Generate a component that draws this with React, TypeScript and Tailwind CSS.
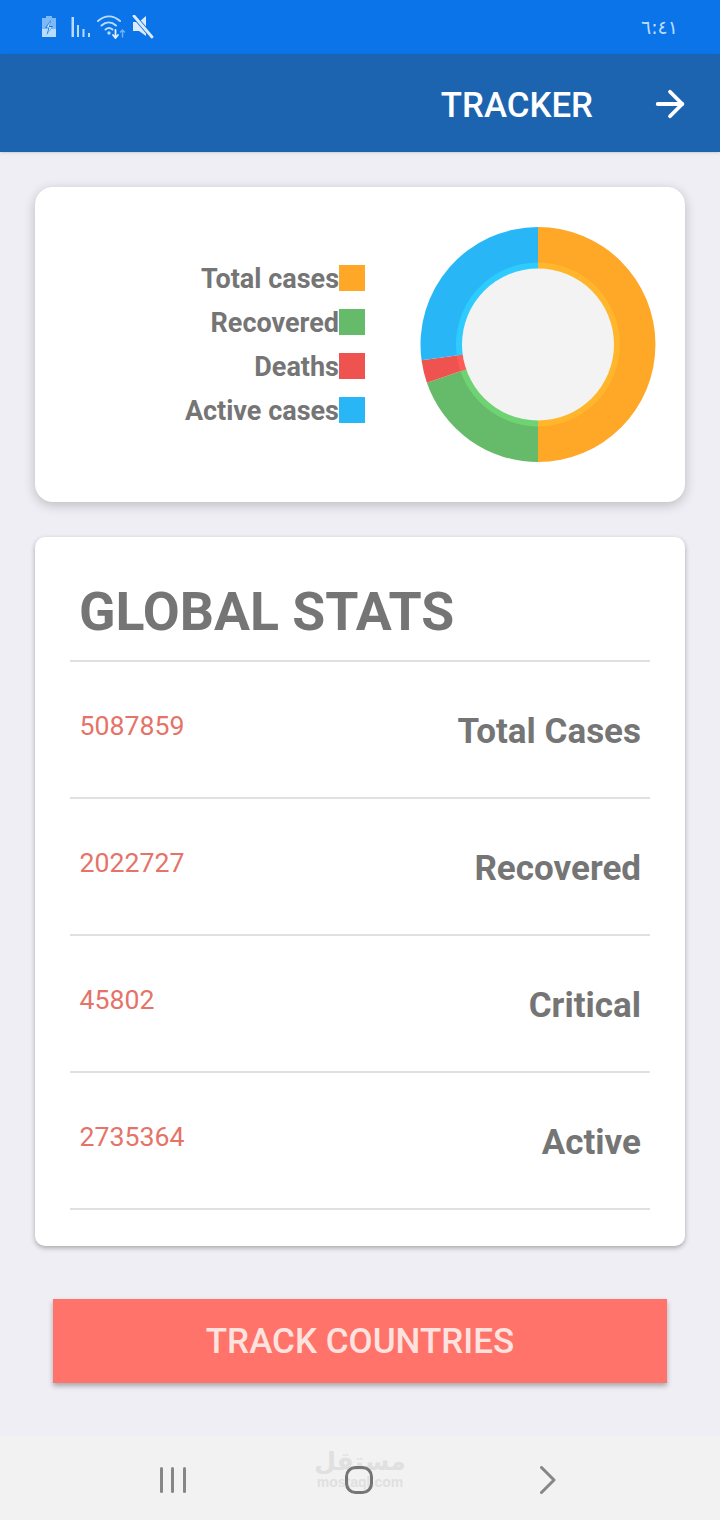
const legend = [
  { label: "Total cases", color: "bg-[#ffa726]" },
  { label: "Recovered", color: "bg-[#66bb6a]" },
  { label: "Deaths", color: "bg-[#ef5350]" },
  { label: "Active cases", color: "bg-[#29b6f6]" },
];

const stats = [
  { value: "5087859", label: "Total Cases" },
  { value: "2022727", label: "Recovered" },
  { value: "45802", label: "Critical" },
  { value: "2735364", label: "Active" },
];

const CX = 120;
const CY = 119.5;

const slicePath = (r: number, from: number, to: number) => {
  const point = (deg: number) => {
    const a = (deg * Math.PI) / 180;
    return `${CX + r * Math.sin(a)} ${CY - r * Math.cos(a)}`;
  };
  const large = to - from > 180 ? 1 : 0;
  return `M${CX} ${CY} L${point(from)} A${r} ${r} 0 ${large} 1 ${point(to)} Z`;
};

const slices = [
  { from: 0, to: 180, outer: "#ffa726", inner: "#ffb62c" },
  { from: 180, to: 251, outer: "#66bb6a", inner: "#6fd273" },
  { from: 251, to: 262.3, outer: "#ef5350", inner: "#ff5c58" },
  { from: 262.3, to: 360, outer: "#29b6f6", inner: "#2ecbff" },
];

const Donut = () => (
  <svg width="240" height="240" viewBox="0 0 240 240" className="shrink-0">
    {slices.map((s) => (
      <path key={s.outer} d={slicePath(117.5, s.from, s.to)} fill={s.outer} />
    ))}
    {slices.map((s) => (
      <path key={s.inner} d={slicePath(82, s.from, s.to)} fill={s.inner} />
    ))}
    <circle cx={CX} cy={CY} r="76" fill="#f3f3f3" />
  </svg>
);

const StatusIcons = () => (
  <div className="flex items-center">
    {/* battery */}
    <svg width="16" height="24" viewBox="0 0 16 24">
      <path d="M5 1h6v2h4v19H1V3h4z" fill="#7db8f7" />
      <path d="M1 14h14v8H1z" fill="#b9dcff" />
      <path d="M10 5 4 13h3.500L5.500 20l6.500-9H8.500z" fill="#0a74e8" />
      <path d="M9.500 6.500 5.500 12.500h3L7 17.500l3.800-5.500H7.800z" fill="#dbeafe" />
    </svg>
    {/* signal */}
    <svg width="20" height="24" viewBox="0 0 20 24" fill="#b9dcff" className="ml-[14px]">
      <rect x="0.500" y="2" width="2.500" height="20" />
      <rect x="6" y="10" width="2" height="12" />
      <rect x="11.500" y="14" width="2" height="8" />
      <rect x="17" y="18" width="2" height="4" />
    </svg>
    {/* wifi with up/down arrows */}
    <svg width="29" height="24" viewBox="0 0 29 24" fill="none" stroke="#b9dcff" strokeLinecap="round" className="ml-[6px]">
      <path d="M1 6C8 0 16 0 23 6" strokeWidth="2" />
      <path d="M4.500 10.500c4.500-4 10-4 14.500 0" strokeWidth="2" />
      <path d="M8.500 14.500c2-1.700 5-1.700 7 0" strokeWidth="2" />
      <circle cx="12" cy="18" r="1.700" fill="#b9dcff" stroke="none" />
      <path d="M18.500 15v8m-2.500-3 2.500 3 2.500-3" stroke="#e4f1ff" strokeWidth="1.800" />
      <path d="M25.500 22v-7m-2 2 2-2 2 2" stroke="#6db0f5" strokeWidth="1.500" />
    </svg>
    {/* muted speaker */}
    <svg width="22" height="24" viewBox="0 0 22 24" className="ml-[6px]">
      <path d="M1 7h6l7-6v20l-7-5H1z" fill="#dbeafe" />
      <path d="M2 1l18 21" stroke="#0a74e8" strokeWidth="4.500" />
      <path d="M2 1l18 21" stroke="#dbeafe" strokeWidth="2.800" strokeLinecap="round" />
    </svg>
  </div>
);

export default function App() {
  return (
    <div className="flex h-[1520px] w-[720px] flex-col overflow-hidden bg-[#eeeef4] font-['Roboto',sans-serif]">
      <div className="flex h-[54px] shrink-0 items-center justify-between bg-[#0a74e8] pl-[41px] pr-[42px]">
        <StatusIcons />
        <span className="font-['DejaVu_Sans',sans-serif] text-[19px] text-[#b9dcff]">٦:٤١</span>
      </div>

      <header className="flex h-[98px] shrink-0 items-center justify-end bg-[#1c64b0] pr-[29px] pt-[2px] shadow-sm">
        <span className="pt-[2px] text-[34.8px] font-medium text-white">TRACKER</span>
        <svg width="42" height="42" viewBox="0 0 24 24" fill="none" stroke="white" strokeWidth="2.200" strokeLinecap="round" strokeLinejoin="round" className="ml-[56px]">
          <path d="M5 12h14" />
          <path d="m12 5 7 7-7 7" />
        </svg>
      </header>

      <main className="flex grow flex-col px-[35px] pt-[35px]">
        <section className="flex h-[315px] items-center rounded-[18px] bg-white pl-[30px] pr-[27px] shadow-[0_3px_12px_rgba(0,0,0,0.22)]">
          <div className="flex grow flex-col items-end gap-[18px] pb-[2px] pr-[53px]">
            {legend.map((item) => (
              <div key={item.label} className="flex h-[26px] items-center">
                <span className="pt-[3px] text-[27px] font-bold leading-[26px] text-[#757575]">{item.label}</span>
                <span className={`h-[26px] w-[26px] ${item.color}`} />
              </div>
            ))}
          </div>
          <Donut />
        </section>

        <section className="mt-[35px] flex h-[709px] flex-col rounded-[10px] bg-white px-[35px] shadow-[0_2px_5px_rgba(0,0,0,0.3)]">
          <h1 className="flex h-[125px] items-center border-b-2 border-[#e0e0e0] pl-[9px] pt-[27px] text-[53.6px] font-bold text-[#757575]">
            GLOBAL STATS
          </h1>
          {stats.map((row) => (
            <div key={row.label} className="flex h-[137px] justify-between border-b-2 border-[#e0e0e0] pl-[9.5px] pr-[9px]">
              <span className="pt-[47px] text-[26.67px] leading-[34px] text-[#e57368]">{row.value}</span>
              <span className="pt-[50px] text-[35px] font-bold leading-[40px] text-[#757575]">{row.label}</span>
            </div>
          ))}
        </section>

        <button className="mx-[18px] mt-[53px] flex h-[84px] items-center justify-center bg-[#ff736a] pt-[2px] text-[35px] font-medium text-[#fde3df] shadow-[0_3px_5px_rgba(0,0,0,0.3)]">
          TRACK COUNTRIES
        </button>
      </main>

      <nav className="relative flex h-[84px] shrink-0 items-center bg-[#f2f2f2] pl-[159px] pt-[3px]">
        <div className="absolute left-[317px] top-[12px] flex w-[86px] flex-col items-center text-[#e0e0e0]">
          <span className="h-[27px] font-['DejaVu_Sans',sans-serif] text-[25px] font-bold leading-[27px]">مستقل</span>
          <span className="h-[14px] font-['Liberation_Sans',sans-serif] text-[14px] font-bold leading-[14px]">mostaql.com</span>
        </div>
        <svg width="28" height="28" viewBox="0 0 28 28" className="relative" fill="#868686">
          <rect x="1" y="1" width="3" height="26" rx="1.500" />
          <rect x="12" y="1" width="3" height="26" rx="1.500" />
          <rect x="24" y="1" width="3" height="26" rx="1.500" />
        </svg>
        <svg width="28" height="28" viewBox="0 0 28 28" className="relative ml-[158px]" fill="none" stroke="#757575" strokeWidth="3">
          <rect x="1.500" y="1.500" width="25" height="25" rx="9" />
        </svg>
        <svg width="16" height="28" viewBox="0 0 16 28" className="relative ml-[167px]" fill="none" stroke="#868686" strokeWidth="3" strokeLinecap="round" strokeLinejoin="round">
          <path d="M1.500 1.500 14 14 1.500 26.500" />
        </svg>
      </nav>
    </div>
  );
}
